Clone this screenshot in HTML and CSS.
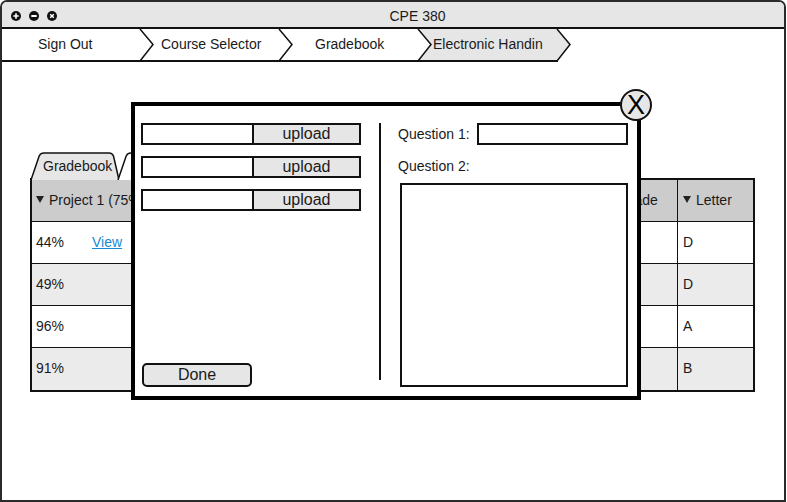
FILE: index.html
```html
<!DOCTYPE html>
<html lang="en">
<head>
<meta charset="utf-8">
<title>CPE 380</title>
<link rel="stylesheet" href="styles.css">
</head>
<body>
<div class="window">
  <header class="titlebar">
    <div class="controls">
      <svg class="ctl" viewBox="0 0 10 10" width="10" height="10"><circle cx="5" cy="5" r="5" fill="#111"/><path d="M5 2.3v5.4M2.3 5h5.4" stroke="#fff" stroke-width="1.6"/></svg>
      <svg class="ctl" viewBox="0 0 10 10" width="10" height="10"><circle cx="5" cy="5" r="5" fill="#111"/><path d="M2.3 5h5.4" stroke="#fff" stroke-width="1.8"/></svg>
      <svg class="ctl" viewBox="0 0 10 10" width="10" height="10"><circle cx="5" cy="5" r="5" fill="#111"/><path d="M3.2 3.2l3.6 3.6M6.8 3.2l-3.6 3.6" stroke="#fff" stroke-width="1.5"/></svg>
    </div>
    <div class="title">CPE 380</div>
  </header>

  <nav class="crumbs">
    <svg class="crumbs-bg" width="782" height="33" viewBox="0 0 782 33">
      <polygon points="416,0 429,15.5 416,31 555,31 568,15.5 555,0" fill="#e6e6e6"/>
      <rect x="0" y="31" width="556" height="2" fill="#111"/>
      <g fill="none" stroke="#111" stroke-width="1.5">
        <polyline points="138,0 151,15.5 138,32"/>
        <polyline points="277,0 290,15.5 277,32"/>
        <polyline points="416,0 429,15.5 416,32"/>
        <polyline points="555,0 568,15.5 555,32"/>
      </g>
    </svg>
    <span class="crumb crumb-1">Sign Out</span>
    <span class="crumb crumb-2">Course Selector</span>
    <span class="crumb crumb-3">Gradebook</span>
    <span class="crumb crumb-4">Electronic Handin</span>
  </nav>

  <main class="content">
    <div class="tabs">
      <div class="tab tab-active">
        <svg class="tab-bg" width="90" height="28" viewBox="0 0 90 28"><path d="M1,28 L9,4.5 Q10.2,1 14,1 L79,1 Q82.5,1 83.6,4.5 L89,28" fill="#e6e6e6" stroke="#111" stroke-width="1.5"/></svg>
        <span class="tab-label">Gradebook</span>
      </div>
      <div class="tab tab-next">
        <svg class="tab-bg" width="90" height="28" viewBox="0 0 90 28"><path d="M1,28 L9,4.5 Q10.2,1 14,1 L79,1 Q82.5,1 83.6,4.5 L89,28" fill="#fff" stroke="#111" stroke-width="1.5"/></svg>
      </div>
    </div>

    <div class="gtable">
      <div class="cell head"><svg class="tri" width="8" height="7" viewBox="0 0 8 7"><path d="M0 0h8L4 7z" fill="#222"/></svg>Project 1 (75%)</div>
      <div class="cell head col-grade"><svg class="tri" width="8" height="7" viewBox="0 0 8 7"><path d="M0 0h8L4 7z" fill="#222"/></svg>Grade</div>
      <div class="cell head col-letter"><svg class="tri" width="8" height="7" viewBox="0 0 8 7"><path d="M0 0h8L4 7z" fill="#222"/></svg>Letter</div>

      <div class="cell"><span class="pct">44%</span><a class="link" href="#">View</a></div>
      <div class="cell col-grade"></div>
      <div class="cell col-letter">D</div>

      <div class="cell alt"><span class="pct">49%</span></div>
      <div class="cell alt col-grade"></div>
      <div class="cell alt col-letter">D</div>

      <div class="cell"><span class="pct">96%</span></div>
      <div class="cell col-grade"></div>
      <div class="cell col-letter">A</div>

      <div class="cell alt last"><span class="pct">91%</span></div>
      <div class="cell alt last col-grade"></div>
      <div class="cell alt last col-letter">B</div>
    </div>
  </main>

  <section class="modal">
    <div class="modal-left">
      <div class="upload-row"><span class="file-field"></span><span class="upload-btn">upload</span></div>
      <div class="upload-row"><span class="file-field"></span><span class="upload-btn">upload</span></div>
      <div class="upload-row"><span class="file-field"></span><span class="upload-btn">upload</span></div>
      <div class="done-btn">Done</div>
    </div>
    <div class="divider"></div>
    <div class="modal-right">
      <div class="q-row"><span class="q-label">Question 1:</span><span class="q-input"></span></div>
      <div class="q-label q2">Question 2:</div>
      <div class="q-area"></div>
    </div>
  </section>
  <div class="close-btn">X</div>
</div>
</body>
</html>
```

FILE: styles.css
```css
* { box-sizing: border-box; }

html, body {
  margin: 0;
  padding: 0;
  background: #fff;
}

body {
  font-family: "Liberation Sans", Arial, Helvetica, sans-serif;
  font-size: 14px;
  color: #1a1a1a;
}

.window {
  position: relative;
  width: 786px;
  height: 502px;
  border: 2px solid #2a2a2a;
  border-radius: 7px 7px 0 0;
  overflow: hidden;
  background: #fff;
}

/* Title bar */
.titlebar {
  display: flex;
  align-items: center;
  height: 27px;
  padding-top: 2px;
  background: #e6e6e6;
  border-bottom: 2px solid #111;
}

.controls {
  display: flex;
  gap: 8px;
  padding-left: 9px;
}

.ctl { display: block; }

.title {
  flex: 1;
  text-align: center;
  padding-right: 6px;
  font-size: 14px;
}

/* Breadcrumbs */
.crumbs {
  position: relative;
  display: flex;
  height: 33px;
}

.crumbs-bg {
  position: absolute;
  left: 0;
  top: 0;
}

.crumb {
  position: relative;
  height: 31px;
  line-height: 31px;
  font-size: 14px;
  white-space: nowrap;
}

.crumb-1 { width: 138px; padding-left: 36px; }
.crumb-2 { width: 139px; padding-left: 21px; }
.crumb-3 { width: 139px; padding-left: 36px; }
.crumb-4 { width: 160px; padding-left: 15px; }

/* Content */
.content {
  padding: 90px 0 0 28px;
}

.tabs {
  display: flex;
  height: 28px;
  margin-bottom: -2px;
  position: relative;
  z-index: 1;
}

.tab {
  position: relative;
  width: 90px;
  height: 28px;
}

.tab-next { margin-left: -3px; }

.tab-bg {
  position: absolute;
  left: 0;
  top: 0;
}

.tab-label {
  position: relative;
  display: block;
  padding-left: 13px;
  line-height: 26px;
  padding-top: 1px;
  font-size: 14px;
}

.gtable {
  display: grid;
  grid-template-columns: 1fr 77px 76px;
  width: 725px;
  border: 2px solid #111;
  position: relative;
}

.cell {
  display: flex;
  align-items: center;
  height: 42px;
  padding-left: 4px;
  padding-bottom: 2px;
  border-bottom: 1px solid #111;
  background: #fff;
  font-size: 14px;
}

.cell.last { border-bottom: none; }

.cell.alt { background: #ebebeb; }

.cell.head { background: #cccccc; }

.col-grade,
.col-letter {
  border-left: 1px solid #111;
  padding-left: 5px;
}

.tri {
  display: block;
  margin-right: 5px;
  flex: none;
}

.pct {
  display: inline-block;
  width: 56px;
}

.link {
  color: #1a8ad4;
  text-decoration: underline;
}

/* Modal */
.modal {
  position: absolute;
  z-index: 5;
  left: 129px;
  top: 100px;
  width: 510px;
  height: 298px;
  border: 4px solid #000;
  background: #fff;
  display: flex;
  padding: 17px 9px 9px 6px;
}

.modal-left {
  width: 220px;
  display: flex;
  flex-direction: column;
  gap: 11px;
}

.upload-row {
  display: flex;
  height: 22px;
  border: 2px solid #111;
}

.file-field {
  width: 109px;
  background: #fff;
}

.upload-btn {
  flex: 1;
  background: #e6e6e6;
  border-left: 2px solid #111;
  text-align: center;
  font-size: 16px;
  line-height: 18px;
}

.done-btn {
  margin-top: auto;
  margin-left: 1px;
  width: 110px;
  height: 24px;
  border: 2px solid #111;
  border-radius: 5px;
  background: #e6e6e6;
  text-align: center;
  font-size: 16px;
  line-height: 20px;
}

.divider {
  width: 2px;
  height: 257px;
  margin-left: 18px;
  background: #111;
}

.modal-right {
  margin-left: 17px;
  width: 230px;
  display: flex;
  flex-direction: column;
}

.q-row {
  display: flex;
  align-items: center;
  height: 22px;
}

.q-label {
  font-size: 14px;
  line-height: 16px;
}

.q-input {
  margin-left: auto;
  width: 151px;
  height: 22px;
  border: 2px solid #111;
}

.q2 { margin-top: 13px; }

.q-area {
  margin-top: 9px;
  margin-left: 2px;
  width: 228px;
  height: 204px;
  border: 2px solid #111;
}

.close-btn {
  position: absolute;
  z-index: 6;
  left: 618px;
  top: 87px;
  width: 32px;
  height: 32px;
  border: 2px solid #111;
  border-radius: 50%;
  background: #e6e6e6;
  text-align: center;
  font-size: 27px;
  line-height: 29px;
  color: #000;
}
```
